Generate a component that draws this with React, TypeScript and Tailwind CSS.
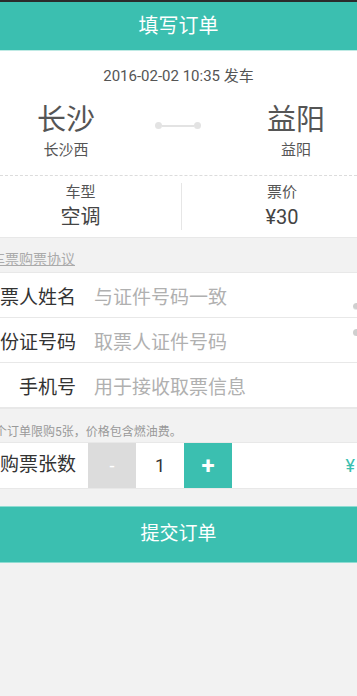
import React from 'react';

const fields = [
  { label: '取票人姓名', placeholder: '与证件号码一致' },
  { label: '身份证号码', placeholder: '取票人证件号码' },
  { label: '手机号', placeholder: '用于接收取票信息' },
];

const App: React.FC = () => {
  return (
    <div className="min-h-screen w-full overflow-hidden bg-[#f2f2f2] font-['Roboto','Noto_Sans_CJK_SC',sans-serif]">
      {/* Title bar */}
      <div className="h-[2px] bg-[#2b2b2b]"></div>
      <div className="h-[48px] bg-[#3bbfb0] flex items-center justify-center text-white text-[20px]">填写订单</div>
      <div className="h-px bg-[#bfeae4]"></div>

      {/* Trip summary */}
      <div className="bg-white">
        <div className="pt-[15px] text-center text-[15px] leading-[20px] text-[#555]">2016-02-02 10:35 发车</div>
        <div className="mt-[17px] flex items-start">
          <div className="w-[132px] flex flex-col items-center">
            <span className="text-[29px] leading-[34px] text-[#555]">长沙</span>
            <span className="mt-[3px] text-[15px] leading-[20px] text-[#555]">长沙西</span>
          </div>
          <div className="flex-1 flex justify-center pr-[11px] pt-[19px]">
            <div className="flex items-center">
              <span className="w-[7px] h-[7px] rounded-full bg-[#e3e3e3]"></span>
              <span className="w-[32px] h-[2px] bg-[#e3e3e3]"></span>
              <span className="w-[7px] h-[7px] rounded-full bg-[#e3e3e3]"></span>
            </div>
          </div>
          <div className="w-[122px] flex flex-col items-center">
            <span className="text-[29px] leading-[34px] text-[#555]">益阳</span>
            <span className="mt-[3px] text-[15px] leading-[20px] text-[#555]">益阳</span>
          </div>
        </div>
        <div className="mt-[15px] border-t border-dashed border-[#dcdcdc]"></div>
        <div className="flex py-[7px]">
          <div className="w-[181px] flex flex-col items-center pr-[20px]">
            <span className="text-[15px] leading-[18px] text-[#555]">车型</span>
            <span className="mt-[3px] text-[20px] leading-[26px] text-[#444]">空调</span>
          </div>
          <div className="w-px bg-[#e6e6e6]"></div>
          <div className="flex-1 flex flex-col items-center pl-[25px]">
            <span className="text-[15px] leading-[18px] text-[#555]">票价</span>
            <span className="mt-[3px] text-[20px] leading-[26px] text-[#444]">¥30</span>
          </div>
        </div>
      </div>

      {/* Agreement */}
      <div className="h-[35px] pt-[11px] border-t border-[#e8e8e8]">
        <span className="block ml-[-9px] text-[14px] leading-[20px] text-[#aaa] underline whitespace-nowrap">车票购票协议</span>
      </div>

      {/* Passenger form */}
      <div className="relative bg-white divide-y divide-[#e8e8e8] border-y border-[#e8e8e8]">
        {fields.map((f) => (
          <div key={f.label} className="h-[45px] pt-[6px] flex items-center">
            <span className="w-[76px] shrink-0 flex justify-end text-[19px] text-[#333] whitespace-nowrap">{f.label}</span>
            <span className="ml-[18px] text-[19px] text-[#b0b0b0] whitespace-nowrap">{f.placeholder}</span>
          </div>
        ))}
        <span className="absolute right-[-3px] top-[30px] w-[7px] h-[7px] rounded-full bg-[#cfcfcf]"></span>
        <span className="absolute right-[-3px] top-[56px] w-[7px] h-[7px] rounded-full bg-[#cfcfcf]"></span>
      </div>

      {/* Notice */}
      <div className="h-[33px] pt-[15px]">
        <span className="block ml-[-17px] text-[12px] leading-[16px] text-[#999] whitespace-nowrap">每个订单限购5张，价格包含燃油费。</span>
      </div>

      {/* Quantity */}
      <div className="h-[47px] bg-white flex items-stretch border-y border-[#e8e8e8]">
        <span className="w-[76px] shrink-0 flex items-center justify-end text-[19px] text-[#333] whitespace-nowrap">购票张数</span>
        <button className="ml-[12px] w-[48px] bg-[#dcdcdc] text-white text-[18px] flex items-center justify-center">-</button>
        <span className="w-[48px] flex items-center justify-center text-[18px] text-[#333]">1</span>
        <button className="w-[48px] bg-[#3bbfb0] text-white text-[24px] font-bold flex items-center justify-center">+</button>
        <span className="flex-1 flex items-center justify-end pr-[2px] text-[18px] text-[#3bbfb0]">¥</span>
      </div>

      <div className="h-[17px]"></div>

      {/* Submit */}
      <button className="w-full h-[57px] bg-[#3bbfb0] border-y border-[#8fdcd2] text-white text-[19px] flex items-center justify-center">提交订单</button>
    </div>
  );
};

export default App;
